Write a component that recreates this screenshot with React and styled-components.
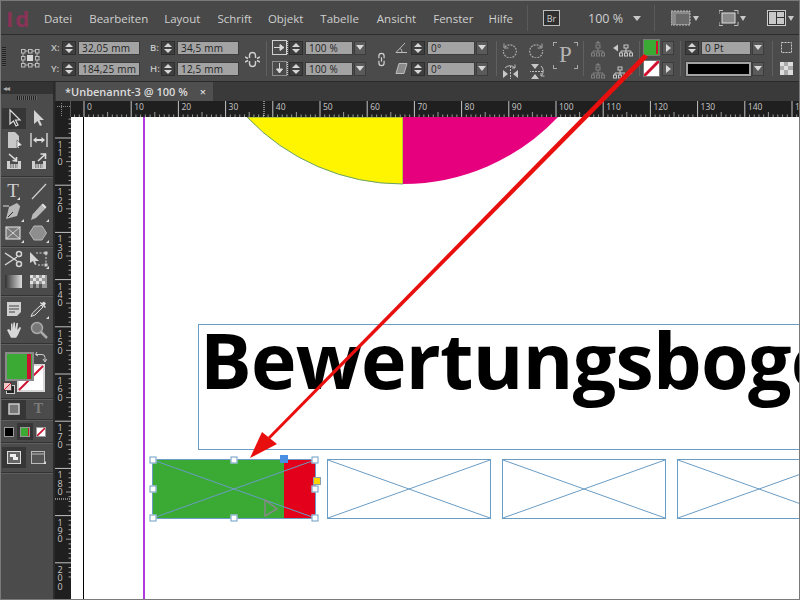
import React from "react";
import styled, { createGlobalStyle } from "styled-components";

const GlobalStyle = createGlobalStyle`
  html, body { margin: 0; padding: 0; background: #4a4a4a; }
  * { box-sizing: border-box; }
`;

const Window = styled.div`
  position: relative;
  width: 800px;
  height: 600px;
  overflow: hidden;
  display: flex;
  flex-direction: column;
  background: #4a4a4a;
  font-family: "Open Sans", "Liberation Sans", sans-serif;
  &::after {
    content: "";
    position: absolute;
    inset: 0;
    box-shadow: inset 0 0 0 1px #7a7a7a;
    pointer-events: none;
  }
`;

/* top menu */
const MenuBar = styled.div`
  height: 35px;
  flex: none;
  display: flex;
  align-items: center;
  background: #484848;
  border-bottom: 1px solid #2c2c2c;
  padding: 2px 0 0 6px;
`;
const Logo = styled.span`
  width: 38px;
  flex: none;
  font-size: 22px;
  font-weight: 700;
  letter-spacing: 2px;
  color: #8a3357;
`;
const MenuItem = styled.span`
  flex: none;
  font-size: 11.5px;
  color: #cfcfcf;
  margin-right: ${(p) => p.$gap}px;
`;
const BarSep = styled.div`
  width: 1px;
  height: 26px;
  flex: none;
  background: #2f2f2f;
  border-right: 1px solid #5a5a5a;
  margin: 0 ${(p) => p.$right || 15}px 0 ${(p) => p.$left || 0}px;
`;
const BrBox = styled.span`
  width: 17px;
  height: 16px;
  flex: none;
  border: 1px solid #bdbdbd;
  background: #2f2f2f;
  color: #d0d0d0;
  font-size: 9px;
  display: flex;
  align-items: center;
  justify-content: center;
`;
const Zoom = styled.span`
  flex: none;
  font-size: 12.5px;
  color: #cfcfcf;
  margin-left: 28px;
  width: 45px;
`;
const BarIcon = styled.svg`
  margin-left: ${(p) => p.$ml || 0}px;
  flex: none;
`;

/* control panel */
const ControlPanel = styled.div`
  height: 47px;
  flex: none;
  display: flex;
  align-items: flex-start;
  padding-top: 6px;
  background: #4b4b4b;
  border-bottom: 1px solid #2a2a2a;
`;
const Group = styled.div`
  margin-left: ${(p) => p.$ml}px;
  display: flex;
  flex-direction: column;
  gap: 8px;
  flex: none;
`;
const Row = styled.div`
  height: 13px;
  display: flex;
  align-items: center;
`;
const IconRow = styled(Row)`
  height: 17px;
  gap: ${(p) => p.$gap}px;
  margin-top: ${(p) => p.$mt || 0}px;
`;
const IconSlot = styled.div`
  margin-top: ${(p) => p.$mt}px;
`;
const Label = styled.span`
  width: 11px;
  font-size: 9.5px;
  font-weight: 600;
  color: #c4c4c4;
`;
const Value = styled.div`
  width: ${(p) => p.$w}px;
  height: 14px;
  margin-left: 2px;
  padding-left: 3px;
  background: #a3a3a3;
  border: 1px solid #3c3c3c;
  color: #232323;
  font-size: 10px;
  line-height: 12px;
  letter-spacing: 0.2px;
  white-space: nowrap;
`;
const Drop = styled.div`
  width: 12px;
  height: 14px;
  margin-left: 1px;
  background: #5a5a5a;
  border: 1px solid #3c3c3c;
  display: flex;
  align-items: center;
  justify-content: center;
  &::before {
    content: "";
    border-left: 4px solid transparent;
    border-right: 4px solid transparent;
    border-top: 5px solid #d8d8d8;
  }
`;
const PanelSep = styled.div`
  width: 1px;
  height: 35px;
  flex: none;
  margin-left: ${(p) => p.$ml}px;
  background: #333;
  border-right: 1px solid #606060;
`;
const Grip = styled.div`
  width: 4px;
  height: 20px;
  margin: 6px 0 0 2px;
  flex: none;
  background: repeating-linear-gradient(#222 0 1px, #555 1px 2px);
`;
const Swatch = styled.div`
  position: relative;
  width: 17px;
  height: 17px;
  background: ${(p) => p.$bg};
  border: 1px solid #777;
`;
const SwatchBand = styled.div`
  position: absolute;
  right: 1px;
  top: 1px;
  bottom: 1px;
  width: 2px;
  background: #d01030;
`;
const PlayBtn = styled.div`
  width: 12px;
  height: 14px;
  margin-left: 2px;
  background: #5a5a5a;
  border: 1px solid #3c3c3c;
  display: flex;
  align-items: center;
  justify-content: center;
  &::before {
    content: "";
    border-top: 4px solid transparent;
    border-bottom: 4px solid transparent;
    border-left: 5px solid #d8d8d8;
  }
`;
const SwatchCol = styled.div`
  margin-left: ${(p) => p.$ml}px;
  margin-top: -2px;
  display: flex;
  flex-direction: column;
  gap: 4px;
  flex: none;
`;
const SwatchRow = styled.div`
  display: flex;
  align-items: center;
`;
const StrokeBar = styled.div`
  width: 65px;
  height: 14px;
  margin-left: 1px;
  background: #000;
  border: 2px solid #a3a3a3;
  outline: 1px solid #3c3c3c;
`;
const ParaP = styled.div`
  width: 25px;
  height: 27px;
  margin: 1px 0 0 7px;
  flex: none;
  color: #b4b4b4;
  font-family: "Liberation Serif", serif;
  font-size: 23px;
  line-height: 26px;
  text-align: center;
  position: relative;
  background:
    linear-gradient(#aaa, #aaa) 0 0 / 4px 1px no-repeat,
    linear-gradient(#aaa, #aaa) 0 0 / 1px 4px no-repeat,
    linear-gradient(#aaa, #aaa) 100% 0 / 4px 1px no-repeat,
    linear-gradient(#aaa, #aaa) 100% 0 / 1px 4px no-repeat,
    linear-gradient(#aaa, #aaa) 0 100% / 4px 1px no-repeat,
    linear-gradient(#aaa, #aaa) 0 100% / 1px 4px no-repeat,
    linear-gradient(#aaa, #aaa) 100% 100% / 4px 1px no-repeat,
    linear-gradient(#aaa, #aaa) 100% 100% / 1px 4px no-repeat;
`;

/* work area */
const Workspace = styled.div`
  flex: 1;
  min-height: 0;
  display: flex;
`;
const ToolPanel = styled.div`
  width: 55px;
  flex: none;
  display: flex;
  flex-direction: column;
  background: #4b4b4b;
  border-right: 2px solid #2b2b2b;
`;
const PanelHead = styled.div`
  height: 12px;
  background: #333;
  color: #aaa;
  font-size: 8px;
  line-height: 11px;
  padding-left: 3px;
  letter-spacing: -1px;
`;
const ToolGrip = styled.div`
  width: 20px;
  height: 4px;
  margin: 2px auto 5px;
  background: repeating-linear-gradient(90deg, #222 0 1px, #666 1px 2px);
`;
const ToolSection = styled.div`
  display: grid;
  grid-template-columns: 25px 25px;
  grid-auto-rows: ${(p) => p.$rh || 22}px;
  justify-items: center;
  align-items: center;
  padding: ${(p) => p.$pad};
  border-bottom: 1px solid #333;
  box-shadow: 0 1px 0 #5e5e5e;
  margin-bottom: 1px;
`;
const ToolCell = styled.div`
  width: ${(p) => (p.$active ? "24px" : "auto")};
  height: ${(p) => (p.$active ? "21px" : "auto")};
  display: flex;
  align-items: center;
  justify-content: center;
  background: ${(p) => (p.$active ? "#363636" : "transparent")};
`;
const ToolLetter = styled.span`
  font-family: "Liberation Serif", serif;
  font-size: ${(p) => p.$size}px;
  font-weight: ${(p) => p.$weight};
  color: ${(p) => p.$color};
  line-height: 1;
`;
const CornerMark = styled.svg`
  align-self: flex-end;
  margin-left: -2px;
`;
const FillBlock = styled.div`
  position: relative;
  height: 54px;
  border-bottom: 1px solid #333;
  box-shadow: 0 1px 0 #5e5e5e;
  margin-bottom: 1px;
`;
const StrokeBox = styled.svg`
  position: absolute;
  left: 17px;
  top: 19px;
`;
const FillBox = styled.div`
  position: absolute;
  left: 5px;
  top: 7px;
  width: 29px;
  height: 29px;
  background: #3aaa35;
  border: 2px solid #8a8a8a;
`;
const FillBand = styled.div`
  position: absolute;
  right: 1px;
  top: 0;
  bottom: 0;
  width: 4px;
  background: #d01030;
`;
const SwapIcon = styled.svg`
  position: absolute;
  left: 35px;
  top: 6px;
`;
const DefaultIcon = styled.svg`
  position: absolute;
  left: 3px;
  top: 37px;
`;
const Chip = styled.div`
  width: 10px;
  height: 10px;
  position: relative;
  background: ${(p) => p.$bg};
  border: 1px solid #999;
  overflow: hidden;
`;
const ChipGroup = styled.div`
  height: 22px;
  display: flex;
  align-items: center;
  justify-content: space-between;
  padding: 0 7px 0 4px;
  border-bottom: 1px solid #333;
  box-shadow: 0 1px 0 #5e5e5e;
  margin-bottom: 1px;
`;
const ChipWell = styled.div`
  width: 16px;
  height: 17px;
  background: #363636;
  display: flex;
  align-items: center;
  justify-content: center;
`;

const DocArea = styled.div`
  flex: 1;
  min-width: 0;
  display: flex;
  flex-direction: column;
`;
const TabRow = styled.div`
  height: 19px;
  flex: none;
  background: #3a3a3a;
  padding-left: 1px;
`;
const Tab = styled.div`
  width: 157px;
  height: 19px;
  background: #4f4f4f;
  color: #dcdcdc;
  font-size: 11px;
  font-weight: 600;
  line-height: 19px;
  padding-left: 9px;
  display: flex;
  justify-content: space-between;
  padding-right: 7px;
`;
const RulerTop = styled.div`
  height: 16px;
  flex: none;
  display: flex;
  background: #1f1f1f;
`;
const RulerCorner = styled.div`
  width: 16px;
  height: 16px;
  flex: none;
  border-right: 1px solid #555;
`;
const Body = styled.div`
  flex: 1;
  min-height: 0;
  display: flex;
`;
const RulerLeft = styled.div`
  width: 16px;
  flex: none;
  background: #1f1f1f;
`;
const Canvas = styled.div`
  position: relative;
  flex: 1;
  overflow: hidden;
  background: #fff;
`;
const PageEdge = styled.div`
  position: absolute;
  left: 12px;
  top: 0;
  bottom: 0;
  width: 1px;
  background: #000;
`;
const Guide = styled.div`
  position: absolute;
  left: 72px;
  top: 0;
  bottom: 0;
  width: 2px;
  background: #b23be0;
`;
const Circle = styled.svg`
  position: absolute;
  left: 170px;
  top: 0;
`;
const TitleFrame = styled.div`
  position: absolute;
  left: 127px;
  top: 207px;
  width: 700px;
  height: 126px;
  border: 1px solid #6a9cc4;
  overflow: hidden;
`;
const Title = styled.h1`
  margin: 0;
  padding-left: 1px;
  font-family: "Open Sans", sans-serif;
  font-size: 77px;
  font-weight: 700;
  line-height: 69px;
  letter-spacing: -0.7px;
  color: #000;
  white-space: nowrap;
`;
const ImageFrame = styled.div`
  position: absolute;
  left: ${(p) => p.$x}px;
  top: 342px;
  width: 164px;
  height: 60px;
  border: 1px solid #6a9cc4;
  background: ${(p) => (p.$filled ? "linear-gradient(90deg, #3aaa35 0 131px, #e2001a 131px)" : "transparent")};
`;
const Cross = styled.svg`
  position: absolute;
  inset: 0;
  width: 100%;
  height: 100%;
`;
const Handle = styled.div`
  position: absolute;
  left: ${(p) => p.$x}%;
  top: ${(p) => p.$y}%;
  width: 7px;
  height: 7px;
  transform: translate(-50%, -50%);
  background: #fff;
  border: 1px solid #6a9cc4;
`;
const Marker = styled.div`
  position: absolute;
  left: ${(p) => p.$x}px;
  top: ${(p) => p.$y}px;
  width: ${(p) => p.$s}px;
  height: ${(p) => p.$s}px;
  background: ${(p) => p.$bg};
  border: 1px solid ${(p) => p.$line};
`;
const Ghost = styled.svg`
  position: absolute;
  left: 109px;
  top: 39px;
`;
const ArrowLayer = styled.svg`
  position: absolute;
  left: 0;
  top: 0;
  pointer-events: none;
`;

const PX = 4.72;

function HRuler() {
  const ticks = [];
  for (let i = -2; i < 156; i++) {
    const x = 13 + i * PX;
    const h = i % 10 === 0 ? 16 : i % 5 === 0 ? 5 : 2.5;
    ticks.push(<line key={i} x1={x} x2={x} y1={16 - h} y2={16} stroke={i % 10 === 0 ? "#c4c4c4" : "#9a9a9a"} strokeWidth="1" />);
    if (i % 10 === 0 && i >= 0) {
      // the last number is cut by the window, only its first digit shows
      ticks.push(
        <text key={"t" + i} x={x + 3} y={9} fill="#c8c8c8" fontSize="8.5" fontFamily="Open Sans">{i === 150 ? "1" : i}</text>
      );
    }
  }
  return (
    <svg width="729" height="16">
      {ticks}
      <line x1="193" x2="193" y1="0" y2="16" stroke="#e8e8e8" strokeDasharray="1 1" />
    </svg>
  );
}

function VRuler() {
  const ticks = [];
  for (let i = 100; i < 204; i++) {
    const y = 21 + (i - 110) * PX;
    const w = i % 10 === 0 ? 16 : i % 5 === 0 ? 5 : 2.5;
    ticks.push(<line key={i} y1={y} y2={y} x1={16 - w} x2={16} stroke={i % 10 === 0 ? "#c4c4c4" : "#9a9a9a"} strokeWidth="1" />);
    if (i % 10 === 0 && i >= 110) {
      String(i).split("").forEach((d, n) => {
        ticks.push(
          <text key={"t" + i + n} x={2.5} y={y + 10 + n * 8.4} fill="#c8c8c8" fontSize="9" fontFamily="Open Sans">{d}</text>
        );
      });
    }
  }
  return (
    <svg width="16" height="483">
      {ticks}
      <line x1="0" x2="16" y1="382" y2="382" stroke="#e8e8e8" strokeDasharray="1 1" />
    </svg>
  );
}

const Stepper = () => (
  <svg width="14" height="14" viewBox="0 0 14 14">
    <rect x=".5" y=".5" width="13" height="13" fill="#3f3f3f" stroke="#2e2e2e" />
    <path d="M3 6h8L7 2zM3 8h8l-4 4z" fill="#d6d6d6" />
  </svg>
);

const RefPoint = () => (
  <svg width="20" height="20" viewBox="0 0 20 20" fill="none" stroke="#bdbdbd">
    {[1, 8, 15].map((x) =>
      [1, 8, 15].map((y) =>
        x === 8 && y === 8 ? (
          <rect key={x + "" + y} x={x - 1} y={y - 1} width="6" height="6" fill="#d8d8d8" stroke="none" />
        ) : (
          <rect key={x + "" + y} x={x + 0.5} y={y + 0.5} width="3.5" height="3.5" />
        )
      )
    )}
    <path d="M5 3h3M12 3h3M5 17h3M12 17h3M3 5v3M3 12v3M17 5v3M17 12v3" />
  </svg>
);

const Link = ({ w = 15, broken }) => (
  <svg width={w} height="17" viewBox="0 0 15 17" fill="none" stroke="#d0d0d0" strokeWidth="1.4">
    <path d="M4.5 7V4.5a3 3 0 0 1 6 0V7M4.5 10v2.5a3 3 0 0 0 6 0V10" />
    {broken && <path d="M0 6l3 1.5M0 11l3-1.5M15 6l-3 1.5M15 11l-3-1.5" />}
    {!broken && <path d="M7.5 6v5" />}
  </svg>
);

const ScaleBox = ({ down }) => (
  <svg width="17" height="16" viewBox="0 0 17 16" fill="none">
    <rect x=".5" y=".5" width="14" height="14" stroke="#d0d0d0" strokeDasharray={down ? "1 1" : "none"} />
    {down ? (
      <path d="M7.5 2v8M4.5 8l3 4 3-4z" stroke="#d8d8d8" fill="#d8d8d8" />
    ) : (
      <path d="M2 7.5h8M8 4.5l4 3-4 3z" stroke="#d8d8d8" fill="#d8d8d8" />
    )}
    <path d="M15.5 1v14" stroke="#d0d0d0" strokeDasharray="1 1" />
  </svg>
);

const AngleIcon = ({ shear }) => (
  <svg width="16" height="13" viewBox="0 0 16 13" fill="none" stroke="#bdbdbd">
    {shear ? <path d="M4 1.5h8l-3 10H1z" fill="#8a8a8a" /> : <path d="M1 11.5h11M1 11.5L10 2M7 11.5a5 5 0 0 0-1.5-4" />}
  </svg>
);

const RotateCW = ({ flip }) => (
  <svg width="16" height="16" viewBox="0 0 16 16" fill="none" stroke="#a8a8a8" strokeWidth="1.2" style={flip ? { transform: "scaleX(-1)" } : undefined}>
    <path d="M13 5A6.5 6.5 0 1 0 14.5 8" strokeDasharray="2 1" />
    <path d="M14 1.5V6H9.5" strokeWidth="1" />
  </svg>
);

const FlipIcon = ({ v }) => (
  <svg width="17" height="17" viewBox="0 0 17 17" fill="none" stroke="#bdbdbd" style={v ? { transform: "rotate(90deg)" } : undefined}>
    <path d="M8.5 3v13" strokeDasharray="2 1" />
    <path d="M1 15V7l5 4zM16 15V7l-5 4z" fill="#c8c8c8" stroke="none" />
    <path d="M3 5a6 5 0 0 1 10 0M13 1.5V5h-3" />
  </svg>
);

const Tree = ({ dim, arrow }) => (
  <svg width={arrow ? 20 : 14} height="17" viewBox={arrow ? "0 0 20 17" : "0 0 14 17"} fill="none" stroke={dim ? "#808080" : "#c8c8c8"}>
    <g transform={arrow === "left" ? "translate(6 0)" : undefined}>
      <rect x="5" y="4" width="4" height="3" />
      <path d="M7 7v3M2 12v-2h10v2M7 10v2" />
      <rect x=".5" y="12" width="3" height="3" />
      <rect x="5.5" y="12" width="3" height="3" />
      <rect x="10.5" y="12" width="3" height="3" />
    </g>
    {arrow === "left" && <path d="M0 7l5-3.5v7z" fill="#c8c8c8" stroke="none" />}
    {arrow === "right" && <path d="M19.5 10l-4.5-3.5v7z" fill="#c8c8c8" stroke="none" />}
    {dim && <path d="M4 2.5L7 0l3 2.5z" fill="#808080" stroke="none" />}
  </svg>
);

const ic = { width: 20, height: 20, viewBox: "0 0 20 20" };
const ICONS = {
  select: <svg {...ic}><path d="M6 2v14l3.5-3 2.5 5 2-1-2.5-5H16z" fill="#333" stroke="#ddd" strokeWidth="1.2" /></svg>,
  direct: <svg {...ic}><path d="M5 2v14l3.5-3 2.5 5 2-1-2.5-5H15z" fill="#d2d2d2" /></svg>,
  page: <svg {...ic}><path d="M4 2h7l4 4v6l3 3-3 1v2H4z" fill="#c8c8c8" /><path d="M13 10v8l2-2 3-.5z" fill="#eee" stroke="#333" strokeWidth=".5" /></svg>,
  gap: <svg {...ic}><path d="M2 3v14M18 3v14" stroke="#ccc" strokeWidth="1.5" /><path d="M4 10l3.5-3v2h5V7l3.5 3-3.5 3v-2h-5v2z" fill="#ddd" /></svg>,
  collectIn: <svg {...ic}><path d="M3 9v8h14V9h-3v3H6V9z" fill="#cfcfcf" /><path d="M6 13h8M6 15h8" stroke="#444" strokeDasharray="1.5 1" /><path d="M5 2l7 6m-3.5.5L12.5 9V5" stroke="#ddd" strokeWidth="1.6" fill="none" /></svg>,
  collectOut: <svg {...ic}><path d="M3 9v8h14V9h-3v3H6V9z" fill="#cfcfcf" /><path d="M6 13h8M6 15h8" stroke="#444" strokeDasharray="1.5 1" /><path d="M9 9l7-6.5M11.5 2H16.5v5" stroke="#ddd" strokeWidth="1.6" fill="none" /></svg>,
  line: <svg {...ic}><path d="M3 18L17 3" stroke="#d0d0d0" strokeWidth="1.2" /></svg>,
  pen: <svg {...ic}><path d="M17 4l-3-3-8 4-3 12 11-3 3-9z" fill="#b8b8b8" /><path d="M5 15l5-5" stroke="#333" /><path d="M0 4h6" stroke="#ddd" /></svg>,
  pencil: <svg {...ic}><path d="M13 3l4 4-9 9-5 2 1.5-5.5z" fill="#b8b8b8" /><path d="M13 3l2-1.5 3.5 3.5L17 7z" fill="#e0e0e0" /></svg>,
  frame: <svg {...ic}><rect x="3" y="4" width="14" height="12" fill="#7a7a7a" stroke="#d4d4d4" strokeWidth="1.2" /><path d="M3 4l14 12M17 4L3 16" stroke="#d4d4d4" /></svg>,
  hexagon: <svg {...ic}><path d="M6 3h8l4.5 7-4.5 7H6l-4.500-7z" fill="#8e8e8e" stroke="#b8b8b8" /></svg>,
  scissors: <svg {...ic} fill="none" stroke="#d4d4d4" strokeWidth="1.5"><circle cx="15" cy="5" r="2.500" /><circle cx="15" cy="15" r="2.500" /><path d="M1 4l12 8M1 16l12-8" /></svg>,
  transform: <svg {...ic} fill="none"><path d="M2 3v11l3-2 2 4 1.500-.7L7 12h4z" fill="#d4d4d4" /><path d="M8 4h10v12H9" stroke="#d4d4d4" strokeDasharray="2 1.5" /><rect x="16.500" y="2.500" width="3" height="3" fill="#d4d4d4" /><rect x="16.500" y="14.500" width="3" height="3" fill="#d4d4d4" /></svg>,
  note: <svg {...ic}><path d="M3 3h14v10l-4 4H3z" fill="#d0d0d0" /><path d="M5 7h10M5 10h10M5 13h6" stroke="#444" /></svg>,
  dropper: <svg {...ic}><path d="M13 6l2 2-8 8-4 1.500 1.500-3.500z" fill="#555" stroke="#ddd" /><path d="M12 4l5 5 1-1-1.500-1.500 1.500-2-2-2-2 1.500L12.500 3z" fill="#ddd" /></svg>,
  hand: <svg {...ic}><path d="M3 10l2-1 2 2V3.500h1.500V9l1-6.500H11V9l1.500-6h1.500l-.7 7 2.500-3 1.300.700-3 7-2 3H7z" fill="#d8d8d8" /></svg>,
  zoom: <svg {...ic} fill="none"><circle cx="8" cy="8" r="5.500" fill="#777" stroke="#aaa" strokeWidth="1.500" /><path d="M12 12l6 6" stroke="#aaa" strokeWidth="2.500" /></svg>,
};

function Corner() {
  return (
    <CornerMark width="3" height="3">
      <path d="M3 0v3H0z" fill="#ddd" />
    </CornerMark>
  );
}

const Tool = ({ name, corner, active }) => (
  <ToolCell $active={active}>
    {ICONS[name]}
    {corner && <Corner />}
  </ToolCell>
);

const None = () => (
  <Cross viewBox="0 0 10 10" preserveAspectRatio="none">
    <path d="M0 10L10 0" stroke="#d01030" strokeWidth="2" />
  </Cross>
);

const Diagonals = ({ color }) => (
  <Cross viewBox="0 0 100 100" preserveAspectRatio="none">
    <path d="M0 0L100 100M100 0L0 100" stroke={color} strokeWidth="1" vectorEffect="non-scaling-stroke" />
  </Cross>
);

const MENU = [
  ["Datei", 17],
  ["Bearbeiten", 16],
  ["Layout", 17],
  ["Schrift", 16],
  ["Objekt", 17],
  ["Tabelle", 18],
  ["Ansicht", 17],
  ["Fenster", 15],
  ["Hilfe", 14],
];

const HANDLES = [
  [0, 0], [50, 0], [100, 0],
  [0, 50], [100, 50],
  [0, 100], [50, 100], [100, 100],
];

export default function App() {
  return (
    <Window>
      <GlobalStyle />
      <MenuBar>
        <Logo>Id</Logo>
        {MENU.map(([label, gap]) => (
          <MenuItem key={label} $gap={gap}>{label}</MenuItem>
        ))}
        <BarSep />
        <BrBox>Br</BrBox>
        <Zoom>100 %</Zoom>
        <BarIcon width="8" height="5" $ml="0" viewBox="0 0 8 5"><path d="M0 0h8L4 5z" fill="#c8c8c8" /></BarIcon>
        <BarSep $left={13} $right={16} />
        <BarIcon width="28" height="16" viewBox="0 0 28 16">
          <rect x="0" y="1" width="19" height="14" fill="#8a8a8a" stroke="#bbb" strokeDasharray="2 1" />
          <rect x="5" y="4" width="13" height="10" fill="#6a6a6a" />
          <path d="M22 6h6l-3 5z" fill="#c8c8c8" />
        </BarIcon>
        <BarIcon width="27" height="16" $ml="20" viewBox="0 0 27 16" fill="none">
          <rect x="3" y="3" width="13" height="10" fill="#8a8a8a" stroke="#ddd" />
          <path d="M0 4V.5h4M15 .5h4V4M0 12v3.500h4M15 15.500h4V12" stroke="#bbb" />
          <path d="M21 6h6l-3 5z" fill="#c8c8c8" />
        </BarIcon>
        <BarIcon width="28" height="16" $ml="21" viewBox="0 0 28 16">
          <rect x=".5" y=".5" width="18" height="15" fill="#333" stroke="#ccc" />
          <rect x="2" y="2" width="7" height="12" fill="#c8c8c8" />
          <rect x="10" y="2" width="7" height="5" fill="#c8c8c8" />
          <rect x="10" y="8" width="7" height="6" fill="#c8c8c8" />
          <path d="M21 6h6l-3 5z" fill="#c8c8c8" />
        </BarIcon>
      </MenuBar>

      <ControlPanel>
        <Grip />
        <Group $ml={14}><IconSlot $mt={7}><RefPoint /></IconSlot></Group>
        <Group $ml={11}>
          <Row><Label>X:</Label><Stepper /><Value $w={62}>32,05 mm</Value></Row>
          <Row><Label>Y:</Label><Stepper /><Value $w={62}>184,25 mm</Value></Row>
        </Group>
        <Group $ml={10}>
          <Row><Label>B:</Label><Stepper /><Value $w={62}>34,5 mm</Value></Row>
          <Row><Label>H:</Label><Stepper /><Value $w={62}>12,5 mm</Value></Row>
        </Group>
        <Group $ml={6}><IconSlot $mt={10}><Link broken /></IconSlot></Group>
        <PanelSep $ml={6} />
        <Group $ml={5}>
          <Row><ScaleBox /><Stepper /><Value $w={48}>100 %</Value><Drop /></Row>
          <Row><ScaleBox down /><Stepper /><Value $w={48}>100 %</Value><Drop /></Row>
        </Group>
        <Group $ml={9}><IconSlot $mt={10}><Link w={13} /></IconSlot></Group>
        <Group $ml={7}>
          <Row><AngleIcon /><Stepper /><Value $w={48}>0°</Value><Drop /></Row>
          <Row><AngleIcon shear /><Stepper /><Value $w={48}>0°</Value><Drop /></Row>
        </Group>
        <PanelSep $ml={8} />
        <Group $ml={5}>
          <IconRow $gap={10}><RotateCW flip /><RotateCW /></IconRow>
          <IconRow $gap={10} $mt={-3}><FlipIcon /><FlipIcon v /></IconRow>
        </Group>
        <ParaP>P</ParaP>
        <PanelSep $ml={5} />
        <Group $ml={7}>
          <IconRow $gap={8}><Tree dim /><Tree arrow="left" /></IconRow>
          <IconRow $gap={8} $mt={-3}><Tree dim /><Tree arrow="right" /></IconRow>
        </Group>
        <PanelSep $ml={6} />
        <SwatchCol $ml={3}>
          <SwatchRow><Swatch $bg="#3aaa35"><SwatchBand /></Swatch><PlayBtn /></SwatchRow>
          <SwatchRow><Swatch $bg="#fff"><None /></Swatch><PlayBtn /></SwatchRow>
        </SwatchCol>
        <PanelSep $ml={6} />
        <Group $ml={4}>
          <Row><Stepper /><Value $w={50}>0 Pt</Value><Drop /></Row>
          <Row><StrokeBar /><Drop /></Row>
        </Group>
        <PanelSep $ml={8} />
        <Group $ml={7}>
          <svg width="13" height="13"><rect x="1.500" y="1.500" width="10" height="10" fill="none" stroke="#ccc" strokeDasharray="2 1" /></svg>
          <svg width="13" height="13"><rect width="13" height="13" fill="#aaa" /><path d="M0 0h4v4H0zM8 0h5v4H8zM4 4h4v4H4zM0 8h4v5H0zM8 8h5v5H8z" fill="#ddd" /></svg>
        </Group>
      </ControlPanel>

      <Workspace>
        <ToolPanel>
          <PanelHead>◂◂</PanelHead>
          <ToolGrip />
          <ToolSection $pad="2px 1px 3px 1px">
            <Tool name="select" active />
            <Tool name="direct" />
            <Tool name="page" />
            <Tool name="gap" />
            <Tool name="collectIn" />
            <Tool name="collectOut" />
          </ToolSection>
          <ToolSection $rh={21} $pad="2px 1px 3px 1px">
            <ToolCell>
              <ToolLetter $size={19} $weight={400} $color="#d0d0d0">T</ToolLetter>
              <Corner />
            </ToolCell>
            <Tool name="line" />
            <Tool name="pen" corner />
            <Tool name="pencil" corner />
            <Tool name="frame" corner />
            <Tool name="hexagon" corner />
          </ToolSection>
          <ToolSection $pad="0 1px 3px 1px">
            <Tool name="scissors" />
            <Tool name="transform" corner />
            <ToolCell><svg width="17" height="13"><defs><linearGradient id="g"><stop stopColor="#333" /><stop offset="1" stopColor="#ddd" /></linearGradient></defs><rect width="17" height="13" fill="url(#g)" /></svg></ToolCell>
            <ToolCell><svg width="17" height="13"><rect width="17" height="13" fill="#999" /><path d="M0 0h3v3H0zM6 0h3v3H6zM12 0h3v3h-3zM3 3h3v3H3zM9 3h3v3H9zM0 6h3v3H0zM6 6h3v3H6zM12 6h3v3h-3z" fill="#e0e0e0" /><path d="M3 9h3v4H3zM9 9h3v4H9z" fill="#555" /></svg></ToolCell>
          </ToolSection>
          <ToolSection $rh={21} $pad="1px 1px 3px 1px">
            <Tool name="note" />
            <Tool name="dropper" corner />
            <Tool name="hand" />
            <Tool name="zoom" />
          </ToolSection>
          <FillBlock>
            <StrokeBox width="28" height="28" viewBox="0 0 28 28">
              <rect width="28" height="28" fill="#d8d8d8" />
              <rect x="2" y="2" width="24" height="24" fill="#fff" />
              <path d="M2 26L26 2" stroke="#d01030" strokeWidth="2" />
            </StrokeBox>
            <FillBox><FillBand /></FillBox>
            <SwapIcon width="12" height="12" viewBox="0 0 12 12" fill="none" stroke="#ccc">
              <path d="M2 1l-1.500 2.500L3 5M1 3.500h6a3 3 0 0 1 3 3V10M8 8l2 3 2-3" />
            </SwapIcon>
            <DefaultIcon width="12" height="12" viewBox="0 0 12 12">
              <rect x="3.500" y="3.500" width="8" height="8" fill="#222" stroke="#ccc" />
              <rect x=".5" y=".5" width="8" height="8" fill="#f0c8c8" stroke="#444" />
              <path d="M1 8l7-7" stroke="#d01030" />
            </DefaultIcon>
          </FillBlock>
          <ToolSection $rh={18} $pad="0 1px 1px 1px">
            <ToolCell $active><svg width="14" height="14"><rect x="2" y="2" width="10" height="10" fill="#777" stroke="#ccc" strokeWidth="1.500" /></svg></ToolCell>
            <ToolCell><ToolLetter $size={14} $weight={700} $color="#7c7c7c">T</ToolLetter></ToolCell>
          </ToolSection>
          <ChipGroup>
            <Chip $bg="#000" />
            <ChipWell><Chip $bg="linear-gradient(90deg, #3aaa35 0 7px, #d01030 7px)" /></ChipWell>
            <Chip $bg="#fff"><None /></Chip>
          </ChipGroup>
          <ToolSection $rh={23} $pad="2px 1px 3px 1px">
            <ToolCell $active>
              <svg width="14" height="13"><rect x=".5" y=".5" width="13" height="12" fill="#666" stroke="#ddd" /><rect x="3" y="3" width="6" height="3" fill="#eee" /><rect x="6" y="6" width="5" height="3" fill="#eee" /></svg>
            </ToolCell>
            <ToolCell>
              <svg width="14" height="13"><rect x=".5" y=".5" width="13" height="12" fill="#555" stroke="#bbb" /><path d="M1 3h12" stroke="#bbb" /></svg>
              <Corner />
            </ToolCell>
          </ToolSection>
        </ToolPanel>

        <DocArea>
          <TabRow>
            <Tab>
              <span>*Unbenannt-3 @ 100 %</span>
              <span>×</span>
            </Tab>
          </TabRow>
          <RulerTop>
            <RulerCorner>
              <svg width="16" height="16" fill="none" stroke="#888" strokeDasharray="1 1"><path d="M2 4.500h13M6.500 1v14" /></svg>
            </RulerCorner>
            <HRuler />
          </RulerTop>
          <Body>
            <RulerLeft><VRuler /></RulerLeft>
            <Canvas>
              <PageEdge />
              <Guide />
              <Circle width="320" height="70" viewBox="0 0 320 70">
                <path d="M6 0A214 214 0 0 0 162 67V0z" fill="#fff500" stroke="#6aa06a" strokeWidth="1" />
                <path d="M162 0V67A214 214 0 0 0 317 0z" fill="#e6007e" />
              </Circle>
              <TitleFrame>
                <Title>Bewertungsbogen</Title>
              </TitleFrame>
              <ImageFrame $x={81} $filled>
                <Diagonals color="#6a9cc4" />
                <Ghost width="16" height="18" viewBox="0 0 16 18">
                  <path d="M3 1v16l12-7z" fill="none" stroke="#888" strokeWidth="1.500" />
                </Ghost>
                {HANDLES.map(([x, y]) => (
                  <Handle key={x + "-" + y} $x={x} $y={y} />
                ))}
                <Marker $x={127} $y={-5} $s={8} $bg="#4a90e2" $line="#4a90e2" />
                <Marker $x={160} $y={17} $s={8} $bg="#ffd400" $line="#8aa0b0" />
              </ImageFrame>
              <ImageFrame $x={256}><Diagonals color="#6a9cc4" /></ImageFrame>
              <ImageFrame $x={431}><Diagonals color="#6a9cc4" /></ImageFrame>
              <ImageFrame $x={606}><Diagonals color="#6a9cc4" /></ImageFrame>
            </Canvas>
          </Body>
        </DocArea>
      </Workspace>

      <ArrowLayer width="800" height="600" viewBox="0 0 800 600">
        <path d="M644 54L648 57L270 439L268 437z" fill="#e8100f" />
        <path d="M250 458L262 432L277 444z" fill="#e8100f" />
      </ArrowLayer>
    </Window>
  );
}
